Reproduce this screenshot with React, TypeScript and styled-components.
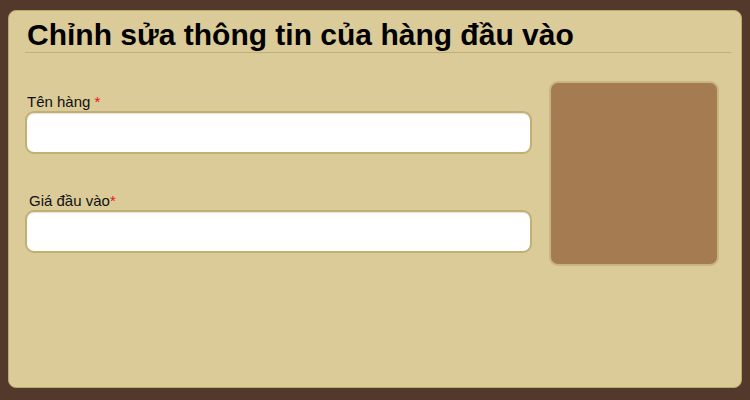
import React from "react";
import styled, { createGlobalStyle } from "styled-components";

const Global = createGlobalStyle`
  html, body {
    margin: 0;
    padding: 0;
    background: #53392c;
    font-family: "Liberation Sans", Arial, sans-serif;
  }
`;

const Page = styled.div`
  padding: 10px 8px 12px 8px;
  width: 750px;
  height: 400px;
  box-sizing: border-box;
`;

const Panel = styled.div`
  width: 734px;
  height: 378px;
  box-sizing: border-box;
  background: #dacb98;
  border: 1px solid #b9a96b;
  border-radius: 8px;
  padding: 7px 10px 0 16px;
  display: flex;
  flex-direction: column;
`;

const Title = styled.h1`
  margin: 0;
  padding-left: 2px;
  font-size: 30px;
  line-height: 34px;
  font-weight: bold;
  color: #000;
  border-bottom: 1px solid #bfb07a;
`;

const Row = styled.div`
  display: flex;
  gap: 17px;
  padding-right: 12px;
  margin-top: 28px;
`;

const Form = styled.div`
  width: 507px;
  display: flex;
  flex-direction: column;
  padding-top: 13px;
`;

const Field = styled.div<{ $gap: number }>`
  display: flex;
  flex-direction: column;
  margin-top: ${(p) => p.$gap}px;
`;

const Label = styled.label<{ $indent?: number }>`
  display: block;
  font-size: 15px;
  line-height: 16px;
  color: #111;
  padding-left: ${(p) => p.$indent ?? 2}px;
  margin-bottom: 1px;
`;

const Req = styled.span`
  color: #ee1111;
`;

const Input = styled.input`
  box-sizing: border-box;
  width: 507px;
  height: 43px;
  border: 2px solid #c1af74;
  border-radius: 9px;
  background: #fff;
  outline: none;
  font-family: inherit;
  font-size: 15px;
  padding: 0 10px;
  box-shadow: inset 0 1px 1px rgba(160, 140, 90, 0.25);
`;

const Picture = styled.div`
  width: 170px;
  height: 185px;
  box-sizing: border-box;
  background: #a57c52;
  border: 2px solid #c8b67e;
  border-radius: 9px;
`;

export default function App() {
  return (
    <>
      <Global />
      <Page>
        <Panel>
          <Title>Chỉnh sửa thông tin của hàng đầu vào</Title>
          <Row>
            <Form>
              <Field $gap={0}>
                <Label>
                  Tên hàng <Req>*</Req>
                </Label>
                <Input type="text" />
              </Field>
              <Field $gap={39}>
                <Label $indent={4}>
                  Giá đầu vào<Req>*</Req>
                </Label>
                <Input type="text" />
              </Field>
            </Form>
            <Picture />
          </Row>
        </Panel>
      </Page>
    </>
  );
}
